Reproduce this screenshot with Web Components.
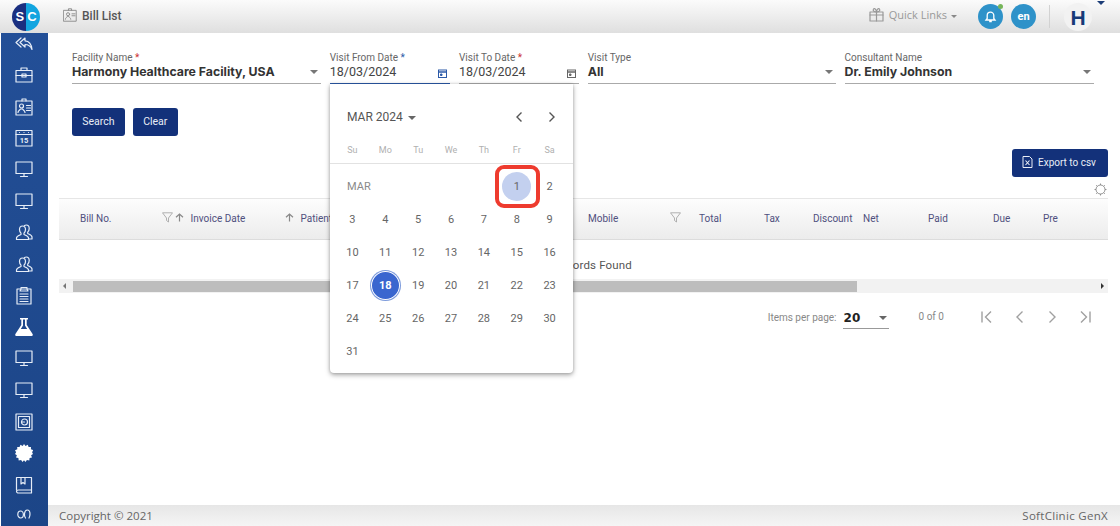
<!DOCTYPE html>
<html>
<head>
<meta charset="utf-8">
<title>Bill List</title>
<style>
    html, body { margin: 0; height: 100%; }
    body { font-family: Roboto, "Liberation Sans", sans-serif; background: #fff; overflow: hidden; }
</style>
</head>
<body>
<bill-app>
    <app-header slot="header" title="Bill List"></app-header>
    <side-nav slot="nav"></side-nav>
    <div slot="main" class="page">
        <filter-bar>
            <form-field style="width:249px" label="Facility Name" req value="Harmony Healthcare Facility, USA" bold arrow></form-field>
            <form-field style="width:120.5px" label="Visit From Date" req="blue" value="18/03/2024" cal active></form-field>
            <form-field style="width:120px" label="Visit To Date" req value="18/03/2024" cal></form-field>
            <form-field style="width:248px" label="Visit Type" value="All" bold arrow></form-field>
            <form-field style="width:249px" label="Consultant Name" value="Dr. Emily Johnson" bold arrow></form-field>
        </filter-bar>
        <action-row>
            <sc-button>Search</sc-button>
            <sc-button>Clear</sc-button>
        </action-row>
        <bill-table></bill-table>
        <table-paginator></table-paginator>
        <date-picker></date-picker>
    </div>
    <app-footer slot="footer"></app-footer>
</bill-app>

<script>
const S = 'fill="none" stroke="currentColor" stroke-width="1.2" stroke-linejoin="round" stroke-linecap="round"';
const monitor = `<svg width="18" height="17" viewBox="0 0 18 17" ${S}><rect x="1" y="1" width="16" height="11.5"/><path d="M9 12.5v2.5M5.5 15.5h7"/></svg>`;
const people = `<svg width="19" height="17" viewBox="0 0 19 17" ${S}><path d="M7.5 2c-2.2 0-3 1.600-3 3.400 0 1.600.7 3 1.500 3.800v1.300c-1.600.8-4.500 1.500-4.500 3.500v1.500h12v-1.500c0-2-2.900-2.700-4.500-3.500V9.200c.8-.8 1.500-2.200 1.500-3.800C10.500 3.600 9.700 2 7.500 2z"/><path d="M9.500 1.400c.5-.3 1.100-.4 1.700-.4 2.200 0 3 1.600 3 3.400 0 1.600-.7 3-1.500 3.800v1.300c1.600.8 4.300 1.500 4.300 3.500v2h-3"/></svg>`;
const icons = {
    back: `<svg width="18" height="14" viewBox="0 0 18 14" ${S} stroke-width="1"><path d="M6 1L1 5.500 6 10M10 1L5 5.500l5 4.500V7.500c3.500 0 5.500 1.500 7 5C16.500 7.500 14 4 10 3.800z"/></svg>`,
    case: `<svg width="18" height="16" viewBox="0 0 18 16" ${S}><rect x="1" y="3.500" width="16" height="11.500"/><path d="M6 3.500V1h6v2.500M1 8.500h16"/><rect x="7" y="7" width="4" height="3"/></svg>`,
    badge: `<svg width="18" height="18" viewBox="0 0 18 18" ${S}><rect x="1" y="3" width="16" height="14"/><path d="M7 3V1h4v2"/><circle cx="6.500" cy="8" r="2"/><path d="M3 14.500c0-2 2-2.500 2.500-3.500h2c.5 1 2.500 1.500 2.500 3.500M11.500 7.500h4M11.500 10h4M11.500 12.500h4"/></svg>`,
    cal: `<svg width="18" height="18" viewBox="0 0 18 18" ${S}><rect x="1" y="1.500" width="16" height="15.500"/><path d="M1 5.500h16M4.500 3.500h0M9 3.500h0M13.500 3.500h0"/><text x="9" y="14" text-anchor="middle" font-family="Roboto" font-size="7.500" font-weight="700" fill="currentColor" stroke="none">15</text></svg>`,
    monitor, people,
    clip: `<svg width="16" height="19" viewBox="0 0 16 19" ${S}><rect x="1" y="3" width="14" height="15"/><path d="M5 3V1.500h6V3l1 2H4zM4 8h8M4 10.500h8M4 13h8M4 15.500h8"/></svg>`,
    flask: `<svg width="18" height="18" viewBox="0 0 18 18"><path fill="currentColor" d="M5 0h8v1.600h-1.300v5.400L17.600 16c.5 1 0 2-1.200 2H1.600C.4 18-.1 17 .4 16L6.300 7V1.600H5zM8 1.600V7.500L5.800 11h6.400L10 7.500V1.600z"/></svg>`,
    safe: `<svg width="18" height="18" viewBox="0 0 18 18" ${S}><rect x="1" y="1" width="16" height="16"/><rect x="3.500" y="3.500" width="11" height="11"/><circle cx="9.500" cy="9" r="3"/><path d="M6.500 9h3"/></svg>`,
    gear: `<svg width="18" height="18" viewBox="0 0 18 18"><path fill="currentColor" d="M9 0l1.500 1.900L12.800.8l.8 2.300 2.400-.2-.1 2.400 2.300.9-1.100 2.100L18 9.900l-1.900 1.300.9 2.300-2.400.5-.3 2.400-2.400-.3L10.500 18 9 16.200 7.500 18l-1.400-1.900-2.400.3-.3-2.400-2.400-.5.9-2.300L0 9.900l1.100-1.600L0 6.200l2.300-.9-.1-2.400 2.400.2.800-2.300 2.300 1.100z"/></svg>`,
    book: `<svg width="18" height="18" viewBox="0 0 18 18" ${S}><path d="M1.500 14V1.500h15V17h-13c-1.100 0-2-.7-2-1.500s.9-1.500 2-1.500h13"/><path d="M6 1.500V8l2-1.500L10 8V1.500"/></svg>`,
    infinity: `<svg width="14" height="10" viewBox="0 0 14 10" ${S} stroke-width="1"><ellipse cx="3.600" cy="5.500" rx="2.800" ry="3.500"/><path d="M8.500 9C7.500 7.500 7.300 6 7.500 4.500 7.900 2 9 1 10.200 1c1.500 0 2.800 1.700 2.800 4 0 1.600-.4 3-1 4"/></svg>`
};

const appTpl = document.createElement('template');
appTpl.innerHTML = `
<style>
    :host { display: grid; grid-template-columns: 48px 1fr; grid-template-rows: 33px 1fr 21px; height: 526px; }
    ::slotted([slot=header]) { grid-column: 1 / 3; }
    ::slotted([slot=nav]) { grid-row: 2 / 4; }
    ::slotted([slot=main]) { position: relative; min-height: 0; padding: 16px 12px 0 11px; }
</style>
<slot name="header"></slot>
<slot name="nav"></slot>
<slot name="main"></slot>
<slot name="footer"></slot>`;
class BillApp extends HTMLElement {
    constructor () {
        super();
        this.attachShadow({mode: 'open'});
        this.shadowRoot.appendChild(appTpl.content.cloneNode(true));
    }
}
customElements.define('bill-app', BillApp);

class AppHeader extends HTMLElement {
    constructor () {
        super();
        this.attachShadow({mode: 'open'}).innerHTML = `
<style>
    :host { display: flex; align-items: center; height: 33px; background: linear-gradient(#fbfbfb, #dfdfdf); color: #666; position: relative; z-index: 2; }
    .logo { width: 28px; height: 28px; border-radius: 50%; margin-left: 12px; background: linear-gradient(90deg, #1a2f80 50%, #12a5e0 50%); color: #fff; font: 700 13px/28px "Liberation Sans", sans-serif; display: flex; justify-content: center; gap: 3px; }
    .page-ico { margin-left: 23px; color: #8b8b8b; display: flex; margin-top: -3px; }
    .title { margin-left: 5px; font: 500 12px Roboto, sans-serif; color: #555; margin-top: -2px; }
    .grow { flex: 1; }
    .links { display: flex; align-items: center; gap: 5px; color: #999; font: 11px "Open Sans", sans-serif; margin-top: -4px; }
    .links i { width: 0; height: 0; border: 3px solid transparent; border-top-color: #888; border-bottom: 0; margin: 3px 0 0 -1px; }
    .round { width: 25px; height: 25px; border-radius: 50%; background: #2e92c9; color: #fff; display: flex; align-items: center; justify-content: center; font: 700 11px Roboto, sans-serif; position: relative; }
    .bell { margin-left: 21px; }
    .bell b { position: absolute; top: 0; right: 0; width: 5px; height: 5px; border-radius: 50%; background: #76b55a; }
    .en { margin-left: 8px; }
    .sep { width: 1px; height: 23px; background: #d2d2d2; margin-left: 13px; }
    .avatar { width: 28px; height: 28px; border-radius: 50%; background: #f2f2f2; margin-left: 14px; color: #173a78; font: 700 21px/30px "Liberation Sans", sans-serif; text-align: center; }
    .caret { width: 0; height: 0; border: 4px solid transparent; border-top: 4px solid #1d3e78; border-bottom: 0; margin: -28px 15px 0 5px; }
</style>
<div class="logo"><span>S</span><span>C</span></div>
<span class="page-ico"><svg width="14" height="14" viewBox="0 0 18 18" ${S}><rect x="1" y="3" width="16" height="14"/><path d="M7 3V1h4v2"/><circle cx="6.500" cy="8" r="2"/><path d="M3 14.500c0-2 2-2.500 2.500-3.500h2c.5 1 2.500 1.500 2.500 3.500M11.500 7.500h4M11.500 10h4"/></svg></span>
<span class="title">${this.getAttribute('title')}</span>
<span class="grow"></span>
<span class="links">
    <svg width="15" height="15" viewBox="0 0 15 15" ${S} stroke-width="1"><rect x="1" y="5" width="13" height="9"/><path d="M1 8h13M7.500 5v9M7.500 5C5 5 3.500 3.500 4.500 2s3 1 3 3c0-2 2-4.500 3-3s-.5 3-3 3"/></svg>
    <span>Quick Links</span><i></i>
</span>
<div class="round bell"><svg width="13" height="13" viewBox="0 0 13 13" fill="none" stroke="#fff" stroke-width="1.300"><path d="M2 10h9L9.800 8.500V5.500a3.300 3.300 0 0 0-6.600 0v3zM5.200 11.500h2.600"/></svg><b></b></div>
<div class="round en">en</div>
<div class="sep"></div>
<div class="avatar">H</div>
<div class="caret"></div>`;
    }
}
customElements.define('app-header', AppHeader);

class SideNav extends HTMLElement {
    constructor () {
        super();
        const list = ['case', 'badge', 'cal', 'monitor', 'monitor', 'people', 'people', 'clip', 'flask', 'monitor', 'monitor', 'safe', 'gear', 'book'];
        this.attachShadow({mode: 'open'}).innerHTML = `
<style>
    :host { display: flex; flex-direction: column; align-items: center; margin-left: 1px; padding-right: 1px; background: linear-gradient(#234f97, #1c4587); color: #e6edf7; }
    div { display: flex; align-items: center; justify-content: center; height: 31.500px; flex: none; }
    .first { height: 22px; margin-bottom: 4.500px; }
    .last { height: 27px; }
    .solid { color: #fff; }
</style>
<div class="first">${icons.back}</div>
${list.map(n => `<div class="${n === 'flask' || n === 'gear' ? 'solid' : ''}">${icons[n]}</div>`).join('')}
<div class="last">${icons.infinity}</div>`;
    }
}
customElements.define('side-nav', SideNav);

class FilterBar extends HTMLElement {
    constructor () {
        super();
        this.attachShadow({mode: 'open'}).innerHTML = `
<style>:host { display: flex; gap: 8.750px; padding-left: 13px; }</style><slot></slot>`;
    }
}
customElements.define('filter-bar', FilterBar);

class FormField extends HTMLElement {
    constructor () {
        super();
        const req = this.getAttribute('req');
        const active = this.hasAttribute('active');
        const star = req === null ? '' : `<span class="${req === 'blue' ? 'blue' : 'star'}">*</span>`;
        const tail = this.hasAttribute('arrow') ? '<i class="arrow"></i>'
            : this.hasAttribute('cal') ? `<svg class="cal" width="9" height="9" viewBox="0 0 9 9" fill="none" stroke="${active ? '#2c5aa8' : '#666'}" stroke-width="1"><rect x=".5" y="1" width="8" height="7.500"/><path d="M.5 3h8" stroke-width="1.500"/><path d="M2.500 5h1.500v1.500H2.500z" fill="${active ? '#2c5aa8' : '#666'}"/></svg>` : '';
        this.attachShadow({mode: 'open'}).innerHTML = `
<style>
    :host { display: block; flex: none; box-sizing: border-box; height: 35px; border-bottom: 1px solid ${active ? '#2c5aa8' : '#aaa'}; }
    label { display: block; font: 10px/12px Roboto, sans-serif; color: #666; margin-top: 3px; }
    .star { color: #c33; }
    .blue { color: #2c5aa8; }
    .row { display: flex; align-items: center; justify-content: space-between; height: 15px; }
    .val { font: 12.500px Roboto, sans-serif; color: #444; }
    .val.bold { font: 700 12.300px Inter, sans-serif; color: #333; }
    .arrow { width: 0; height: 0; border: 4px solid transparent; border-top: 4px solid #777; border-bottom: 0; margin-right: 3px; }
    .cal { margin-right: 3px; margin-top: 3px; }
</style>
<label>${this.getAttribute('label')} ${star}</label>
<div class="row"><span class="val ${this.hasAttribute('bold') ? 'bold' : ''}">${this.getAttribute('value')}</span>${tail}</div>`;
    }
}
customElements.define('form-field', FormField);

class ActionRow extends HTMLElement {
    constructor () {
        super();
        this.attachShadow({mode: 'open'}).innerHTML = `
<style>:host { display: flex; gap: 8px; padding: 24px 0 0 13px; }</style><slot></slot>`;
    }
}
customElements.define('action-row', ActionRow);

class ScButton extends HTMLElement {
    constructor () {
        super();
        this.attachShadow({mode: 'open'}).innerHTML = `
<style>
    :host { display: inline-flex; align-items: center; gap: 6px; box-sizing: border-box; height: 28px; padding: 0 10.300px 2px; border-radius: 3px; background: #13317a; color: #e9edf6; font: 10.500px Roboto, sans-serif; }
</style><slot></slot>`;
    }
}
customElements.define('sc-button', ScButton);

class BillTable extends HTMLElement {
    constructor () {
        super();
        const funnel = `<svg width="11" height="11" viewBox="0 0 11 11" fill="none" stroke="#a8a8a8" stroke-width=".9" stroke-linejoin="round"><path d="M.5.800h10L6.500 6v4L4.500 8.500V6z"/></svg>`;
        const up = `<svg width="9" height="9" viewBox="0 0 9 9" fill="none" stroke="#888" stroke-width="1.200"><path d="M4.500 8.500V1M1 4.300L4.500 1 8 4.300"/></svg>`;
        // width, label, filter icon + its right margin, left padding, sort arrow
        const cols = [
            [116, 'Bill No.', funnel, 2, 21],
            [110, 'Invoice Date', '', 0, 0, up],
            [303, 'Patient', '', 0, 0, up],
            [111, 'Mobile', funnel, 18],
            [65, 'Total'], [49, 'Tax'], [50, 'Discount'], [65, 'Net'], [65, 'Paid'], [50, 'Due'], [65, 'Pre']
        ];
        const ticks = [0, 45, 90, 135, 180, 225, 270, 315].map(a => `<path d="M6.500 .5v1.500" transform="rotate(${a} 6.500 6.500)"/>`).join('');
        this.attachShadow({mode: 'open'}).innerHTML = `
<style>
    :host { display: block; }
    .tools { display: flex; flex-direction: column; align-items: flex-end; margin-top: 13px; color: #888; }
    .export { height: 28px; width: 96px; padding: 0 0 2px 10px; justify-content: flex-start; font-size: 10px; gap: 5px; }
    .gear { margin: 4px 1px 0 0; height: 17px; }
    .head { display: flex; align-items: center; height: 42px; box-sizing: border-box; padding-bottom: 2px; border-top: 1px solid #e6e6e6; border-bottom: 1px solid #dcdcdc; background: linear-gradient(#fdfdfd, #ececec); color: #50507e; font: 10px Roboto, sans-serif; }
    .th { display: flex; align-items: center; flex: none; box-sizing: border-box; white-space: nowrap; }
    .th .f { margin-left: auto; }
    .th .u { margin-right: 6.500px; }
    .empty { height: 39px; box-sizing: border-box; padding-top: 18px; text-align: center; font: 11.500px/14px Roboto, sans-serif; color: #555; letter-spacing: .15px; }
    .bar { display: flex; align-items: center; height: 14px; background: #f2f2f2; margin-top: 0; }
    .bar i { width: 0; height: 0; border: 3px solid transparent; }
    .l { border-right-color: #777 !important; border-left: 0 !important; margin: 0 7px 0 4px; }
    .r { border-left-color: #333 !important; border-right: 0 !important; margin: 0 4px 0 auto; }
    .thumb { width: 784px; height: 11px; background: #bdbdbd; }
</style>
<div class="tools">
    <sc-button class="export"><svg width="11" height="12" viewBox="0 0 11 12" fill="none" stroke="#e9edf6"><path d="M1 .5h6.500L10 3v8.500H1z"/><path d="M3.500 4.500l4 4.500M7.500 4.500l-4 4.500" stroke-width="1.100"/></svg>Export to csv</sc-button>
    <span class="gear"><svg width="13" height="13" viewBox="0 0 13 13" fill="none" stroke="#888" stroke-width=".9"><circle cx="6.500" cy="6.500" r="4.500"/>${ticks}</svg></span>
</div>
<div class="head">
    ${cols.map(c => `<div class="th" style="width:${c[0]}px;padding-left:${c[4] || 0}px">${c[5] ? `<span class="u">${c[5]}</span>` : ''}<span>${c[1]}</span>${c[2] ? `<span class="f" style="margin-right:${c[3]}px">${c[2]}</span>` : ''}</div>`).join('')}
</div>
<div class="empty">No Records Found</div>
<div class="bar"><i class="l"></i><div class="thumb"></div><i class="r"></i></div>`;
    }
}
customElements.define('bill-table', BillTable);

class TablePaginator extends HTMLElement {
    constructor () {
        super();
        const nav = d => `<svg width="16" height="16" viewBox="0 0 16 16" fill="none" stroke="#a0a0a0" stroke-width="1.400"><path d="${d}"/></svg>`;
        this.attachShadow({mode: 'open'}).innerHTML = `
<style>
    :host { display: flex; align-items: center; justify-content: flex-end; height: 48px; padding-right: 15px; color: #888; font: 10px Roboto, sans-serif; }
    .size { display: flex; align-items: center; justify-content: space-between; width: 46px; height: 21px; box-sizing: border-box; border-bottom: 1px solid #999; margin: 2px 0 0 6px; font: 700 12px "DejaVu Sans", sans-serif; color: #222; padding: 0 0 0 1px; }
    .size i { width: 0; height: 0; border: 4px solid transparent; border-top: 4px solid #666; border-bottom: 0; margin-right: 2px; }
    .count { margin: -1px 35px 0 30px; }
    .nav { display: flex; gap: 16.700px; }
</style>
<span>Items per page:</span>
<div class="size"><span>20</span><i></i></div>
<span class="count">0 of 0</span>
<div class="nav">
    ${nav('M3 2.500v11M12 2.500L6.500 8l5.500 5.500')}
    ${nav('M10.500 2.500L5 8l5.500 5.500')}
    ${nav('M5.500 2.500L11 8l-5.500 5.500')}
    ${nav('M13 2.500v11M4 2.500L9.500 8 4 13.500')}
</div>`;
    }
}
customElements.define('table-paginator', TablePaginator);

class DatePicker extends HTMLElement {
    constructor () {
        super();
        const days = [];
        for (let d = 1; d <= 31; d++) days.push(`<span class="c ${d === 1 ? 'hover' : ''} ${d === 18 ? 'sel' : ''}"><b>${d}</b></span>`);
        this.attachShadow({mode: 'open'}).innerHTML = `
<style>
    :host { position: absolute; left: 282px; top: 51px; width: 243px; height: 289px; box-sizing: border-box; padding: 0 6px; background: #fff; border-radius: 0 0 4px 4px; box-shadow: 0 2px 5px rgba(0,0,0,.35), 0 0 3px rgba(0,0,0,.15); z-index: 3; color: #666; font: 11px Roboto, sans-serif; }
    .top { display: flex; align-items: center; height: 66px; margin-bottom: -6px; padding-left: 11px; font-size: 12px; color: #555; }
    .top i { width: 0; height: 0; border: 4px solid transparent; border-top: 4px solid #666; border-bottom: 0; margin: 2px 0 0 5px; }
    .top svg { flex: none; }
    .top .prev { margin-left: auto; }
    .top .next { margin: 0 9px 0 21px; }
    .wk, .grid { display: grid; grid-template-columns: repeat(7, 32.860px); }
    .wk { height: 13px; font-size: 9px; color: #b0b0b0; text-align: center; line-height: 13px; }
    hr { border: 0; border-top: 1px solid #e2e2e2; margin: 6px -6px 0; }
    .grid { grid-auto-rows: 33px; margin-top: 6px; }
    .c { display: flex; align-items: center; justify-content: center; }
    .c b { font-weight: 400; display: flex; align-items: center; justify-content: center; width: 29px; height: 29px; box-sizing: border-box; border-radius: 50%; }
    .mar { grid-column: 1 / 6; padding-left: 11px; line-height: 33px; color: #8a8a8a; }
    .hover b { background: #c3d0ef; }
    .sel b { background: #3a66cf; color: #fff; font-weight: 700; box-shadow: 0 0 0 1px #fff inset, 0 0 0 1px #7e9cdc; }
    .mark { position: absolute; left: 165px; top: 81px; width: 45px; height: 43px; box-sizing: border-box; border: 4px solid #ee3b2e; border-radius: 9px; }
</style>
<div class="top">
    <span>MAR 2024</span><i></i>
    <svg class="prev" width="12" height="12" viewBox="0 0 12 12" fill="none" stroke="#555" stroke-width="1.400"><path d="M8.500 1.500L4 6l4.500 4.500"/></svg>
    <svg class="next" width="12" height="12" viewBox="0 0 12 12" fill="none" stroke="#555" stroke-width="1.400"><path d="M3.500 1.500L8 6l-4.500 4.500"/></svg>
</div>
<div class="wk"><span>Su</span><span>Mo</span><span>Tu</span><span>We</span><span>Th</span><span>Fr</span><span>Sa</span></div>
<hr>
<div class="grid"><span class="mar">MAR</span>${days.join('')}</div>
<div class="mark"></div>`;
    }
}
customElements.define('date-picker', DatePicker);

class AppFooter extends HTMLElement {
    constructor () {
        super();
        this.attachShadow({mode: 'open'}).innerHTML = `
<style>
    :host { display: flex; align-items: center; justify-content: space-between; padding: 0 12px 0 11px; background: linear-gradient(#e6e6e6, #f5f5f5); color: #666; font: 11.500px "Open Sans", sans-serif; }
    .brand { letter-spacing: .3px; }
</style>
<span>Copyright © 2021</span><span class="brand">SoftClinic GenX</span>`;
    }
}
customElements.define('app-footer', AppFooter);
</script>
</body>
</html>
